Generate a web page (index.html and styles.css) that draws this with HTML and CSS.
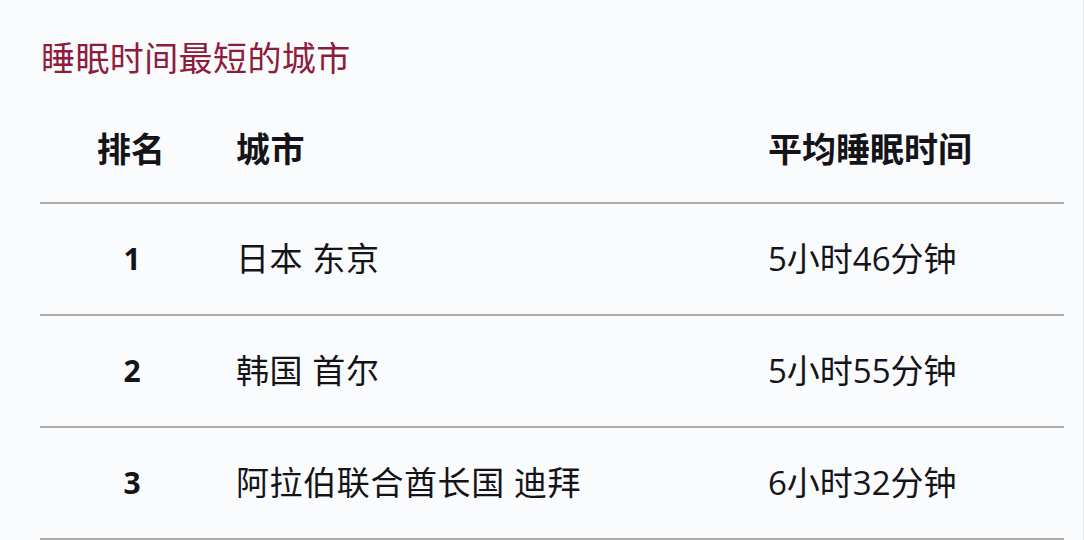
FILE: index.html
```html
<!DOCTYPE html>
<html lang="zh-CN">
<head>
<meta charset="utf-8">
<title>睡眠时间最短的城市</title>
<link rel="stylesheet" href="styles.css">
</head>
<body>
<div class="page">
  <h1 class="title">睡眠时间最短的城市</h1>
  <div class="table">
    <div class="row head">
      <div class="cell rank">排名</div>
      <div class="cell city">城市</div>
      <div class="cell time">平均睡眠时间</div>
    </div>
    <div class="row">
      <div class="cell rank num">1</div>
      <div class="cell city">日本 东京</div>
      <div class="cell time">5小时46分钟</div>
    </div>
    <div class="row">
      <div class="cell rank num">2</div>
      <div class="cell city">韩国 首尔</div>
      <div class="cell time">5小时55分钟</div>
    </div>
    <div class="row">
      <div class="cell rank num">3</div>
      <div class="cell city">阿拉伯联合酋长国 迪拜</div>
      <div class="cell time">6小时32分钟</div>
    </div>
  </div>
</div>
</body>
</html>
```
FILE: styles.css
```css
html, body {
  margin: 0;
  padding: 0;
  background: #fafbfd;
}
body {
  font-family: "Open Sans", "Noto Sans CJK SC", sans-serif;
  color: #141418;
}
.page {
  box-sizing: border-box;
  width: 1084px;
  height: 540px;
  padding: 37px 20px 0 40px;
  border-right: 1px solid #e6e7ea;
  overflow: hidden;
}
.title {
  margin: 0;
  padding-left: 1px;
  font-family: "Noto Sans CJK SC", sans-serif;
  font-weight: normal;
  font-size: 34px;
  line-height: 40px;
  height: 40px;
  color: #8e1c3a;
  letter-spacing: 0.4px;
}
.table {
  margin-top: 20px;
  width: 1024px;
}
.row {
  display: grid;
  grid-template-columns: 182px 530px 1fr;
  align-items: center;
  box-sizing: border-box;
  height: 112px;
  border-bottom: 2px solid #ababab;
}
.row.head {
  height: 107px;
  font-family: "Noto Sans CJK SC", sans-serif;
  font-weight: bold;
}
.cell {
  font-size: 33px;
  line-height: 40px;
}
.head .cell {
  font-size: 34px;
  padding-bottom: 4px;
}
.rank {
  text-align: center;
}
.num {
  font-weight: bold;
  font-size: 30px;
  padding-left: 2px;
}
.city {
  padding-left: 14px;
  letter-spacing: 0.6px;
}
.time {
  padding-left: 16px;
}
```
